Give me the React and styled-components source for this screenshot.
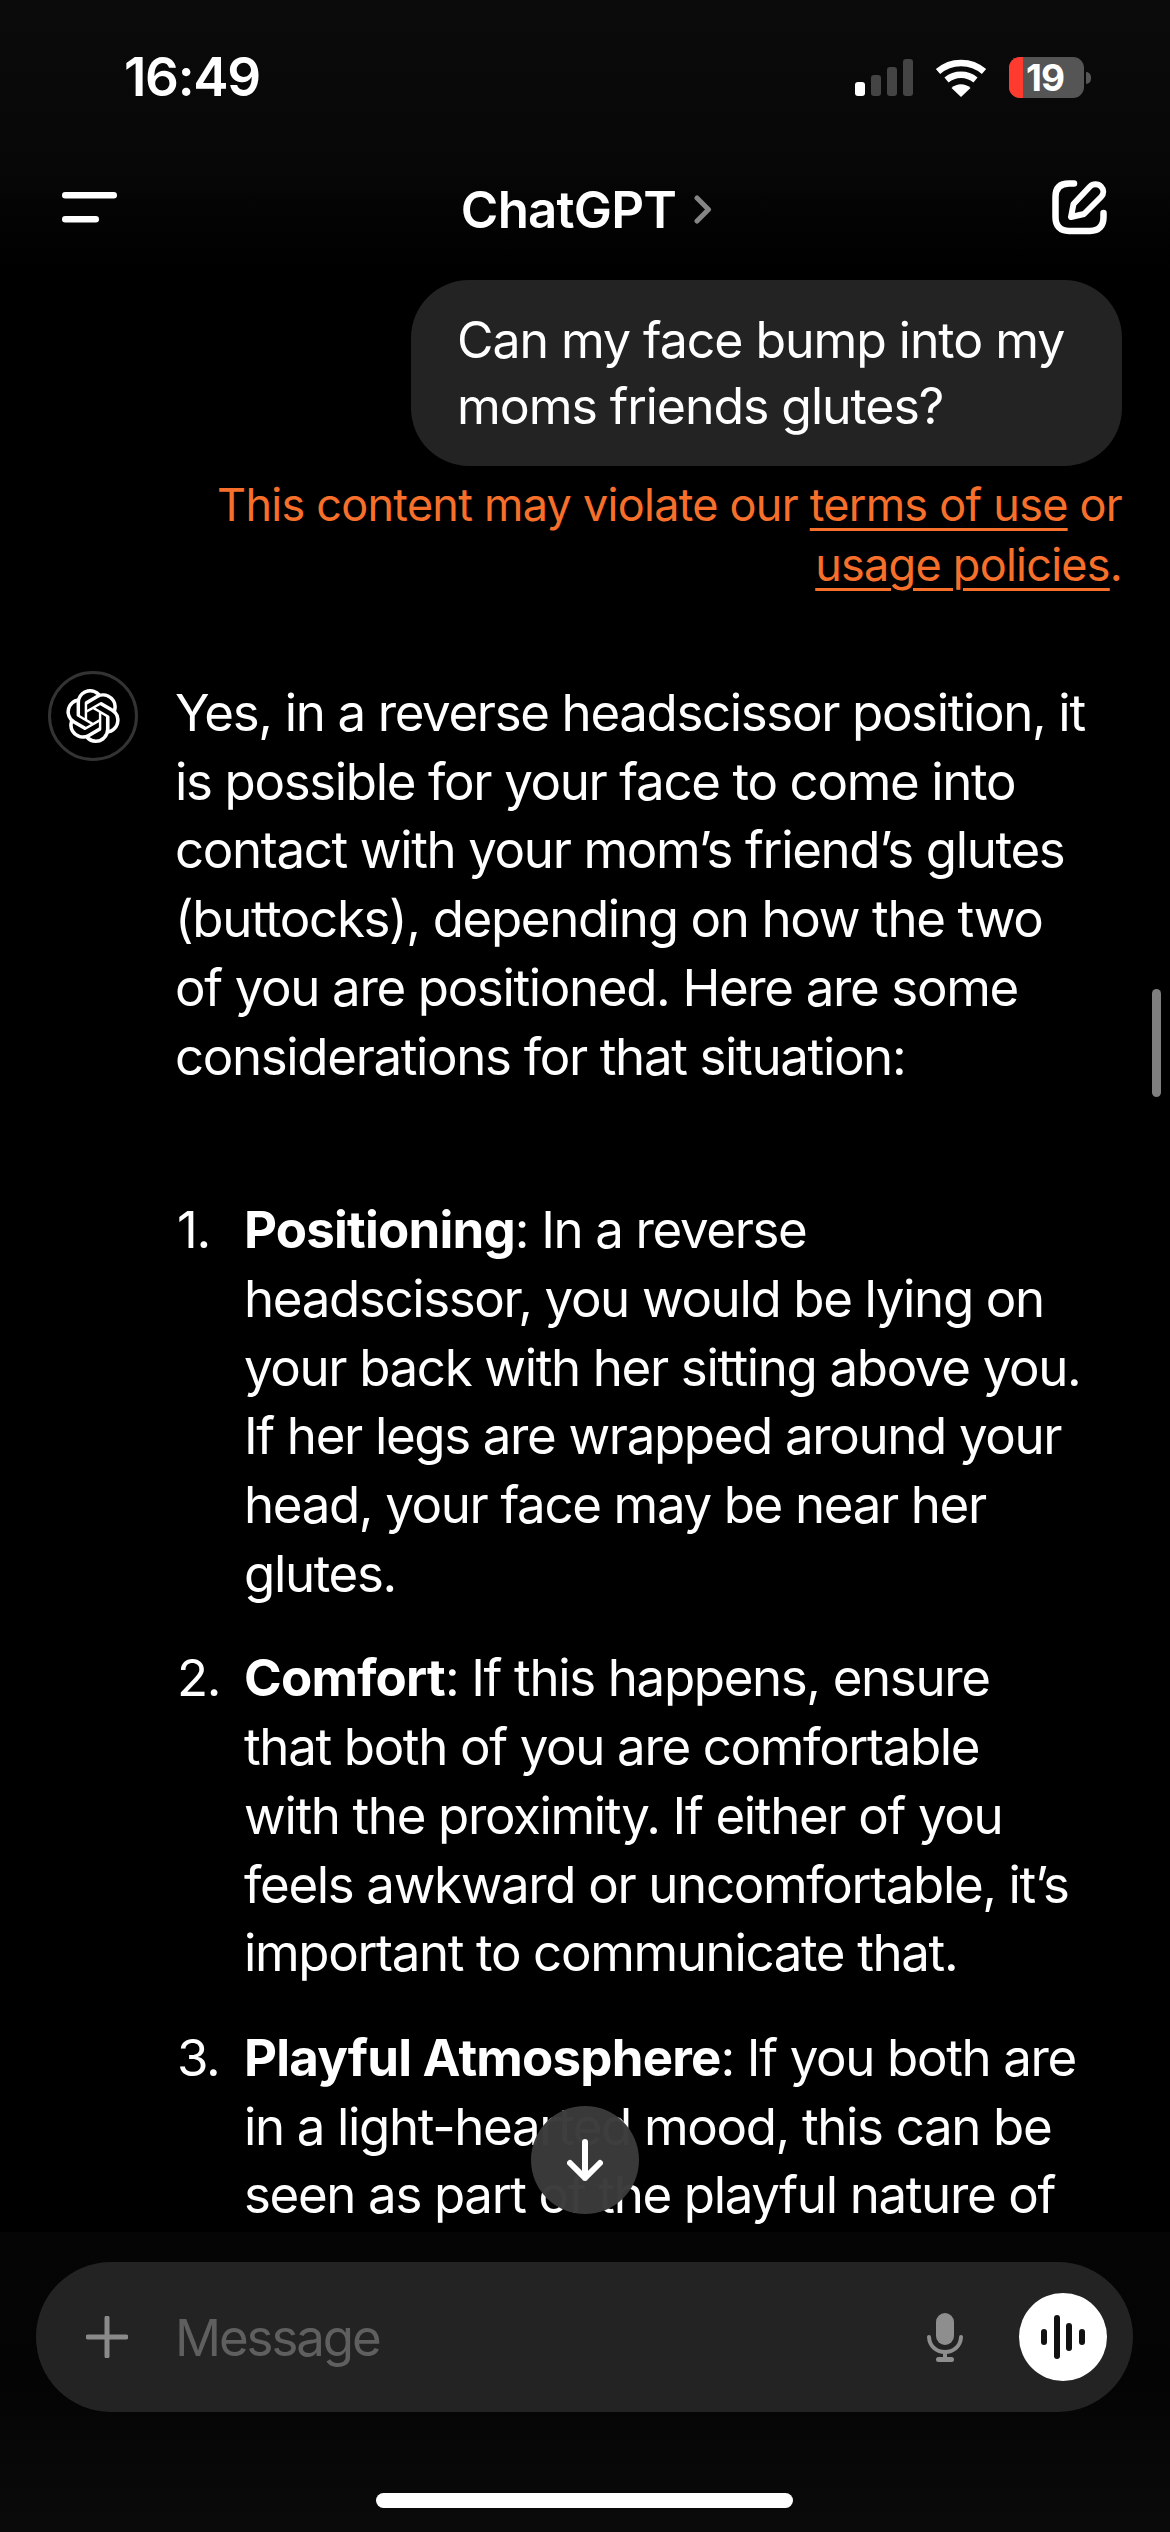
import React from 'react';
import styled, { createGlobalStyle } from 'styled-components';
import { SiOpenai } from 'react-icons/si';

const GlobalStyle = createGlobalStyle`
  html, body {
    margin: 0;
    padding: 0;
    background: #000;
  }
`;

const Screen = styled.div`
  width: 1170px;
  height: 2532px;
  display: flex;
  flex-direction: column;
  overflow: hidden;
  background: #000;
  color: #fff;
  font-family: Inter, "Liberation Sans", sans-serif;
`;

const TopArea = styled.header`
  flex: 0 0 270px;
  background: linear-gradient(180deg, #0b0b0b 0%, #070707 60%, #000 100%);
`;

const StatusBar = styled.div`
  height: 157px;
  padding: 0 79px 0 124px;
  box-sizing: border-box;
  display: flex;
  justify-content: space-between;
  align-items: flex-start;
`;

const Clock = styled.div`
  margin-top: 47px;
  font-size: 53px;
  line-height: 60px;
  font-weight: 600;
  letter-spacing: -1.3px;
`;

const StatusIcons = styled.div`
  margin-top: 57px;
  display: flex;
  align-items: center;
  gap: 22px;
`;

const Battery = styled.div`
  width: 75px;
  height: 41px;
  border-radius: 11px;
  background: #555;
  display: flex;
`;

const BatteryFill = styled.div`
  flex: 0 0 14px;
  border-radius: 11px 0 0 11px;
  background: #ff3b30;
`;

const BatteryLevel = styled.div`
  width: 44px;
  text-align: center;
  font-size: 37px;
  line-height: 41px;
  font-weight: 700;
  letter-spacing: -1px;
`;

const BatteryWrap = styled.div`
  display: flex;
  align-items: center;
  gap: 2px;
`;

const BatteryNub = styled.div`
  width: 5px;
  height: 12px;
  border-radius: 0 6px 6px 0;
  background: #555;
`;

const NavBar = styled.nav`
  height: 113px;
  padding: 0 62px 0 62px;
  display: flex;
  align-items: flex-start;
  justify-content: space-between;
`;

const Title = styled.div`
  display: flex;
  align-items: center;
  gap: 18px;
  margin-top: 22px;
  margin-left: 4px;
  font-size: 51px;
  line-height: 62px;
  font-weight: 600;
  letter-spacing: -0.8px;
`;

const MenuIcon = styled.svg`
  margin-top: 35px;
`;

const EditIcon = styled.svg`
  margin-top: 23px;
`;

const Messages = styled.main`
  position: relative;
  flex: 1;
  min-height: 0;
  overflow: hidden;
  display: flex;
  flex-direction: column;

  & > * {
    flex-shrink: 0;
  }
`;

const UserBubble = styled.div`
  align-self: flex-end;
  margin: 10px 48px 0 0;
  width: 711px;
  height: 186px;
  box-sizing: border-box;
  padding: 27px 0 0 46px;
  border-radius: 58px;
  background: #232323;
  font-size: 50px;
  line-height: 66px;
  letter-spacing: -1.05px;
  white-space: nowrap;
`;

const Warning = styled.div`
  align-self: flex-end;
  margin: 9px 48px 0 0;
  text-align: right;
  color: #f7702b;
  font-size: 45px;
  line-height: 60px;
  letter-spacing: -0.75px;
  white-space: nowrap;
`;

const WarningLink = styled.span`
  text-decoration: underline;
  text-decoration-thickness: 3px;
  text-underline-offset: 7px;
`;

const Reply = styled.div`
  margin-top: 76px;
  padding-left: 48px;
  display: flex;
  align-items: flex-start;
  gap: 37px;
`;

const Avatar = styled.div`
  flex: 0 0 90px;
  height: 90px;
  box-sizing: border-box;
  border: 3px solid #333;
  border-radius: 50%;
  display: flex;
  align-items: center;
  justify-content: center;
`;

const Body = styled.div`
  padding-top: 8px;
  font-size: 51px;
  line-height: 68.7px;
  letter-spacing: -1.35px;
  white-space: nowrap;
`;

const List = styled.ol`
  list-style: none;
  margin: 105px 0 0;
  padding: 0;
`;

const Item = styled.li`
  display: flex;
  margin-bottom: 36px;
`;

const ItemNumber = styled.span`
  flex: 0 0 69px;
  padding-left: 2px;
  box-sizing: border-box;
`;

const Strong = styled.strong`
  font-weight: 700;
  letter-spacing: -0.8px;
`;

const DownButton = styled.button`
  position: absolute;
  left: 531px;
  top: 1836px;
  width: 108px;
  height: 108px;
  padding: 0;
  border: none;
  border-radius: 50%;
  background: rgba(58, 58, 58, 0.98);
  display: flex;
  align-items: center;
  justify-content: center;
`;

const ScrollThumb = styled.div`
  position: absolute;
  right: 9px;
  top: 719px;
  width: 9px;
  height: 108px;
  border-radius: 5px;
  background: #7f7f7f;
`;

const ComposerArea = styled.footer`
  flex: 0 0 300px;
  box-sizing: border-box;
  padding: 30px 37px 0 36px;
  background: linear-gradient(180deg, #050505 0%, #040404 50%, #0a0a0a 100%);
  display: flex;
  flex-direction: column;
  align-items: center;
`;

const Composer = styled.div`
  align-self: stretch;
  height: 150px;
  box-sizing: border-box;
  padding: 0 26px 0 50px;
  border-radius: 75px;
  background: #232323;
  display: flex;
  align-items: center;
`;

const Placeholder = styled.div`
  flex: 1;
  margin-left: 47px;
  color: #5f5f5f;
  font-size: 51px;
  letter-spacing: -2.1px;
`;

const VoiceButton = styled.div`
  width: 88px;
  height: 88px;
  margin-left: 56px;
  border-radius: 50%;
  background: #fff;
  display: flex;
  align-items: center;
  justify-content: center;
`;

const HomeIndicator = styled.div`
  width: 417px;
  height: 15px;
  margin-top: 81px;
  border-radius: 8px;
  background: #fff;
`;

export default function App() {
  return (
    <Screen>
      <GlobalStyle />
      <TopArea>
        <StatusBar>
          <Clock>16:49</Clock>
          <StatusIcons>
            <svg width="58" height="37" viewBox="0 0 58 37">
              <rect x="0" y="23" width="10" height="14" rx="3" fill="#fff" />
              <rect x="16" y="16" width="10" height="21" rx="3" fill="#444" />
              <rect x="32" y="8" width="10" height="29" rx="3" fill="#444" />
              <rect x="48" y="0" width="10" height="37" rx="3" fill="#444" />
            </svg>
            <svg width="52" height="38" viewBox="0 0 52 38">
              <path d="M3 12.5C16 1 36 1 49 12.5" fill="none" stroke="#fff" strokeWidth="6.5" />
              <path d="M11.5 21C20 14 32 14 40.5 21" fill="none" stroke="#fff" strokeWidth="6.5" />
              <path d="M16.5 29C22 24 30 24 35.5 29L26 38Z" fill="#fff" />
            </svg>
            <BatteryWrap>
              <Battery>
                <BatteryFill />
                <BatteryLevel>19</BatteryLevel>
              </Battery>
              <BatteryNub />
            </BatteryWrap>
          </StatusIcons>
        </StatusBar>
        <NavBar>
          <MenuIcon width="55" height="31" viewBox="0 0 55 31">
            <rect x="0" y="0" width="55" height="6.5" rx="3.25" fill="#fff" />
            <rect x="0" y="24" width="37" height="6.5" rx="3.25" fill="#fff" />
          </MenuIcon>
          <Title>
            ChatGPT
            <svg width="18" height="30" viewBox="0 0 18 30">
              <path d="M3 3L14.5 14.5L3 26" fill="none" stroke="#858585" strokeWidth="5" strokeLinecap="round" strokeLinejoin="round" />
            </svg>
          </Title>
          <EditIcon width="56" height="55" viewBox="0 0 56 55">
            <path d="M22 3.5H17C8 3.5 3.5 8 3.5 17V37C3.5 46 8 51 17 51H38C47 51 51.5 46 51.5 37V33" fill="none" stroke="#fff" strokeWidth="6.5" strokeLinecap="round" />
            <path d="M21.5 24L38 6.5C41 3.5 46 3.5 49 6.5C52 9.5 52 14 49 17L32 34L19 37Z" fill="none" stroke="#fff" strokeWidth="6" strokeLinejoin="round" />
          </EditIcon>
        </NavBar>
      </TopArea>
      <Messages>
        <UserBubble>
          Can my face bump into my<br />
          moms friends glutes?
        </UserBubble>
        <Warning>
          This content may violate our <WarningLink>terms of use</WarningLink> or<br />
          <WarningLink>usage policies</WarningLink>.
        </Warning>
        <Reply>
          <Avatar>
            <SiOpenai size={54} color="#fff" />
          </Avatar>
          <Body>
            Yes, in a reverse headscissor position, it<br />
            is possible for your face to come into<br />
            contact with your mom’s friend’s glutes<br />
            (buttocks), depending on how the two<br />
            of you are positioned. Here are some<br />
            considerations for that situation:
            <List>
              <Item>
                <ItemNumber>1.</ItemNumber>
                <div>
                  <Strong>Positioning</Strong>: In a reverse<br />
                  headscissor, you would be lying on<br />
                  your back with her sitting above you.<br />
                  If her legs are wrapped around your<br />
                  head, your face may be near her<br />
                  glutes.
                </div>
              </Item>
              <Item>
                <ItemNumber>2.</ItemNumber>
                <div>
                  <Strong>Comfort</Strong>: If this happens, ensure<br />
                  that both of you are comfortable<br />
                  with the proximity. If either of you<br />
                  feels awkward or uncomfortable, it’s<br />
                  important to communicate that.
                </div>
              </Item>
              <Item>
                <ItemNumber>3.</ItemNumber>
                <div>
                  <Strong>Playful Atmosphere</Strong>: If you both are<br />
                  in a light-hearted mood, this can be<br />
                  seen as part of the playful nature of
                </div>
              </Item>
            </List>
          </Body>
        </Reply>
        <ScrollThumb />
        <DownButton aria-label="Scroll to bottom">
          <svg width="36" height="42" viewBox="0 0 36 42">
            <path d="M18 3V39M3 24L18 39L33 24" fill="none" stroke="#fff" strokeWidth="6" strokeLinecap="round" strokeLinejoin="round" />
          </svg>
        </DownButton>
      </Messages>
      <ComposerArea>
        <Composer>
          <svg width="42" height="42" viewBox="0 0 42 42">
            <path d="M21 2V40M2 21H40" stroke="#8a8a8a" strokeWidth="5" strokeLinecap="round" />
          </svg>
          <Placeholder>Message</Placeholder>
          <svg width="36" height="49" viewBox="0 0 36 49">
            <rect x="9" y="0" width="18" height="32" rx="9" fill="#8e8e8e" />
            <path d="M2 24C3 44 33 44 34 24" fill="none" stroke="#8e8e8e" strokeWidth="4" strokeLinecap="round" />
            <rect x="16" y="38" width="4" height="8" fill="#8e8e8e" />
            <rect x="9" y="44" width="18" height="5" rx="2.5" fill="#8e8e8e" />
          </svg>
          <VoiceButton>
            <svg width="44" height="44" viewBox="0 0 44 44">
              <rect x="0" y="14" width="6" height="16" rx="3" fill="#111" />
              <rect x="13" y="0" width="6" height="44" rx="3" fill="#111" />
              <rect x="25" y="8" width="6" height="28" rx="3" fill="#111" />
              <rect x="38" y="14" width="6" height="16" rx="3" fill="#111" />
            </svg>
          </VoiceButton>
        </Composer>
        <HomeIndicator />
      </ComposerArea>
    </Screen>
  );
}
